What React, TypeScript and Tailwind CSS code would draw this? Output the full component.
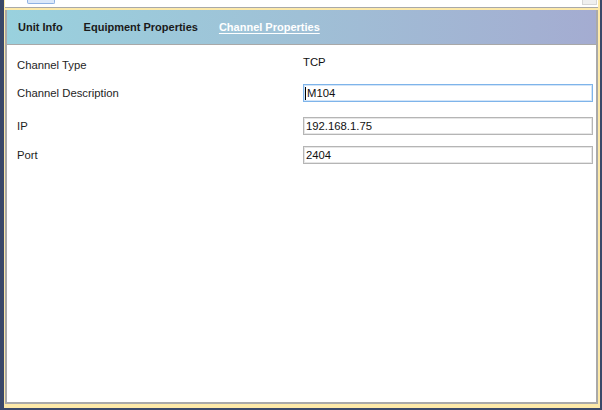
import React from 'react'

const font = { fontFamily: '"Liberation Sans", Arial, sans-serif' }

interface FieldProps {
    label: string
    value: string
    focused?: boolean
    className?: string
}

const Field = ({ label, value, focused = false, className = '' }: FieldProps): JSX.Element => {
    return (
        <div className={`flex items-center h-[18px] ${className}`}>
            <div className="w-[296px] pl-[10px] text-[11.3px] leading-[14px] text-[#1e1e1e]">{label}</div>
            <div
                className={`flex items-center w-[290px] h-[18px] bg-white border pl-[1px] text-[11.3px] text-[#111] ${
                    focused
                        ? 'border-[#7eb4ea] shadow-[inset_0_0_0_1px_#d3e5f8]'
                        : 'border-[#b5b5b5] shadow-[inset_0_0_0_1px_#e6e6e6]'
                }`}
            >
                {focused && <span className="w-[1px] h-[13px] bg-black"></span>}
                <span className="pl-[1px]">{value}</span>
            </div>
        </div>
    )
}

export default function App(): JSX.Element {
    return (
        <div className="w-[602px] h-[410px] bg-[#3a4869] pl-[4px] pr-[2px] pb-[2px] flex" style={font}>
            <div className="flex-1 flex flex-col bg-[#fde9a9] pl-[1px] pr-[2px] pb-[4px]">
                {/* strip of the window above */}
                <div className="h-[8px] bg-white border-b border-[#a9a9a9] flex justify-between items-start mb-[2px]">
                    <div className="ml-[22px] w-[28px] h-[4px] bg-[#dbe8fa] border border-t-0 border-[#8fb2e4] rounded-b-[2px]"></div>
                    <div className="mr-[1px] w-[15px] h-[5px] bg-[#efefef] border border-t-0 border-[#d6d6d6]"></div>
                </div>

                <div className="flex-1 flex flex-col bg-white border-x-2 border-b-2 border-[#a9a9a9]">
                    <div className="h-[35px] flex items-center gap-[21px] pl-[11px] pt-[1px] border-b border-[#a8a8a8] bg-gradient-to-r from-[#99d1de] via-[#9fc0d6] to-[#a4acd1] text-[11px] font-bold">
                        <span className="text-[#1a1a1a]">Unit Info</span>
                        <span className="text-[#1a1a1a]">Equipment Properties</span>
                        <span className="text-white underline underline-offset-[2px]">Channel Properties</span>
                    </div>

                    <div className="flex flex-col pt-[10px]">
                        <div className="flex items-start h-[20px]">
                            <div className="w-[296px] pl-[10px] pt-[3px] text-[11.3px] leading-[14px] text-[#1e1e1e]">Channel Type</div>
                            <div className="text-[11.3px] leading-[14px] text-[#111]">TCP</div>
                        </div>
                        <Field label="Channel Description" value="M104" focused className="mt-[9px]" />
                        <Field label="IP" value="192.168.1.75" className="mt-[15px]" />
                        <Field label="Port" value="2404" className="mt-[11px]" />
                    </div>
                </div>
            </div>
        </div>
    )
}
